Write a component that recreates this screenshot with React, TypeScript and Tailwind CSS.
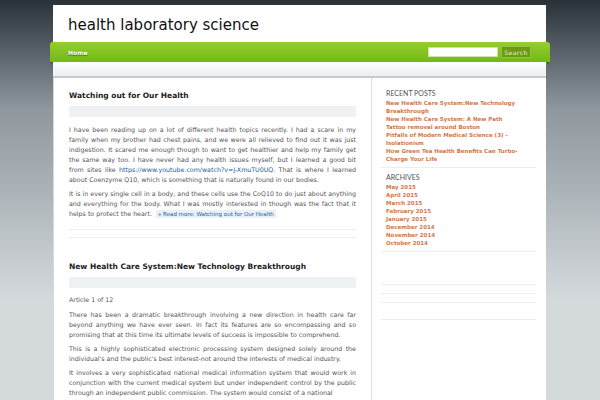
import React from "react";

const recent = [
  "New Health Care System:New Technology Breakthrough",
  "New Health Care System: A New Path",
  "Tattoo removal around Boston",
  "Pitfalls of Modern Medical Science (3) - Isolationism",
  "How Green Tea Health Benefits Can Turbo-Charge Your Life",
];

const archives = [
  "May 2015",
  "April 2015",
  "March 2015",
  "February 2015",
  "January 2015",
  "December 2014",
  "November 2014",
  "October 2014",
];

function PostTitle({ children }: { children: React.ReactNode }) {
  return (
    <>
      <h2 className="text-[7.5px] leading-[10px] font-bold text-[#222]">{children}</h2>
      <div className="mt-[5px] h-[11px] bg-[#eef2f4]" />
    </>
  );
}

export default function App() {
  return (
    <div
      className="min-h-[400px] h-[400px] overflow-hidden bg-[linear-gradient(to_bottom,#2a3239_0px,#8f989e_110px,#d4d9dc_300px)] pt-[5px]"
      style={{ fontFamily: '"DejaVu Sans", Verdana, sans-serif' }}
    >
      <div className="ml-[53px] w-[493px] bg-white">
        {/* header */}
        <header className="h-[37px] flex items-center pl-[15px]">
          <h1 className="text-[15px] text-[#111] mt-[3px]">health laboratory science</h1>
        </header>

        {/* nav */}
        <nav className="relative -ml-[3px] -mr-[4px] h-[20px] rounded-t-[3px] bg-[linear-gradient(to_bottom,#93cf2e,#74b816)] flex items-center justify-between pl-[18px] pr-[19px]">
          <a className="text-[6px] font-bold text-white [text-shadow:0_1px_1px_#3e6a08]">Home</a>
          <div className="flex items-center gap-[3px]">
            <div className="w-[70px] h-[10px] bg-white border border-[#cfe3a8]" />
            <div className="w-[30px] h-[12px] bg-[#6c9a16] border border-[#94c23f] text-[6px] tracking-[0.5px] text-[#e6f0d2] flex items-center justify-center">
              Search
            </div>
          </div>
          <span className="absolute left-0 -bottom-[3px] w-0 h-0 border-t-[3px] border-l-[3px] border-t-[#3f6a0c] border-l-transparent" />
          <span className="absolute right-0 -bottom-[3px] w-0 h-0 border-t-[3px] border-r-[3px] border-t-[#3f6a0c] border-r-transparent" />
        </nav>
        <div className="h-[16px] bg-[linear-gradient(to_bottom,#ffffff,#eceeef)] border-b-2 border-[#c8ccce]" />

        {/* body */}
        <div className="flex border-l border-[#d6d9db] h-[322px]">
          <main className="w-[317px] px-[15px] pt-[13px] text-[6.3px] leading-[10px] text-[#555]">
            <PostTitle>Watching out for Our Health</PostTitle>
            <div className="mt-[8px] text-justify">
              <p>
                I have been reading up on a lot of different health topics recently. I had a scare in my family
                when my brother had chest pains, and we were all relieved to find out it was just indigestion. It
                scared me enough though to want to get healthier and help my family get the same way too. I have
                never had any health issues myself, but I learned a good bit from sites like{" "}
                <a className="text-[#1d5c9c]">https://www.youtube.com/watch?v=J-XmuTU0UQ</a>. That is where I
                learned about Coenzyme Q10, which is something that is naturally found in our bodies.
              </p>
              <p className="mt-[4px]">
                It is in every single cell in a body, and these cells use the CoQ10 to do just about anything and
                everything for the body. What I was mostly interested in though was the fact that it helps to
                protect the heart.{" "}
                <a className="ml-[2px] px-[2px] py-[1px] bg-[#e9f0f7] text-[#2b5d8f] text-[5.5px]">
                  » Read more: Watching out for Our Health
                </a>
              </p>
            </div>
            <div className="mt-[10px] border-t border-[#eeeeee]" />
            <div className="mt-[7px] border-t border-[#eeeeee]" />

            <div className="mt-[24px]">
              <PostTitle>New Health Care System:New Technology Breakthrough</PostTitle>
            </div>
            <div className="mt-[7px] text-justify">
              <p>Article 1 of 12</p>
              <p className="mt-[5px]">
                There has been a dramatic breakthrough involving a new direction in health care far beyond anything
                we have ever seen. In fact its features are so encompassing and so promising that at this time its
                ultimate levels of success is impossible to comprehend.
              </p>
              <p className="mt-[4px]">
                This is a highly sophisticated electronic processing system designed solely around the individual's
                and the public's best interest-not around the interests of medical industry.
              </p>
              <p className="mt-[4px]">
                It involves a very sophisticated national medical information system that would work in conjunction
                with the current medical system but under independent control by the public through an independent
                public commission. The system would consist of a national
              </p>
            </div>
          </main>

          <aside className="w-[175px] border-l border-[#dddddd] pl-[9px] pr-[10px] pt-[11px]">
            <div className="pl-[5px]">
              <h3 className="text-[7px] leading-[8px] text-[#555]" style={{ fontFamily: "Lato, sans-serif" }}>
                RECENT POSTS
              </h3>
              <ul className="mt-[2px] text-[5.5px] leading-[8px] font-bold text-[#d0784a]">
                {recent.map((r) => (
                  <li key={r}>{r}</li>
                ))}
              </ul>
            </div>
            <div className="mt-[4px] border-t border-[#eeeeee]" />
            <div className="pl-[5px] mt-[5px]">
              <h3 className="text-[7px] leading-[8px] text-[#555]" style={{ fontFamily: "Lato, sans-serif" }}>
                ARCHIVES
              </h3>
              <ul className="mt-[2px] text-[5.5px] leading-[8px] font-bold text-[#d0784a]">
                {archives.map((a) => (
                  <li key={a}>{a}</li>
                ))}
              </ul>
            </div>
            <div className="mt-[4px] border-t border-[#eeeeee]" />
            <div className="mt-[32px] border-t border-[#eeeeee]" />
            <div className="mt-[8px] border-t border-[#eeeeee]" />
            <div className="mt-[8px] border-t border-[#eeeeee]" />
            <div className="mt-[16px] border-t border-[#eeeeee]" />
          </aside>
        </div>
      </div>
    </div>
  );
}
